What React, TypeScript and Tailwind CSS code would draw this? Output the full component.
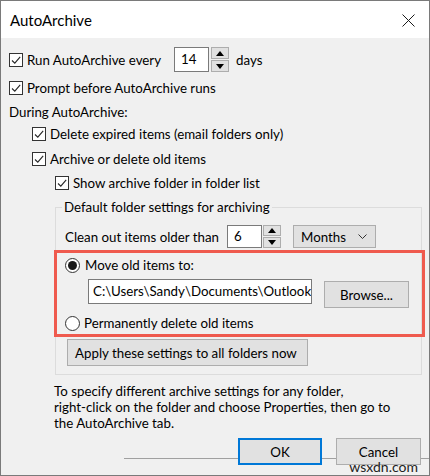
import React from "react";

function CheckBox() {
  return (
    <span className="inline-flex w-[14px] h-[14px] shrink-0 items-center justify-center border border-[#333333] bg-white">
      <svg width="12" height="12" viewBox="0 0 12 12">
        <polyline points="2,6.5 4.8,9.2 10.2,2.8" fill="none" stroke="#262626" strokeWidth="1.1" />
      </svg>
    </span>
  );
}

function Radio({ checked }: { checked?: boolean }) {
  return (
    <span className="inline-flex w-[15px] h-[15px] shrink-0 items-center justify-center rounded-full border border-[#333333] bg-white">
      {checked && <span className="w-[9px] h-[9px] rounded-full bg-[#1a1a1a]" />}
    </span>
  );
}

function Spinner({ h }: { h: number }) {
  const half = h === 25 ? "h-[12px]" : "h-[11px]";
  return (
    <div className="flex flex-col justify-between w-[18px]" style={{ height: h }}>
      <div className={`${half} border border-[#adadad] bg-[#e1e1e1] flex items-center justify-center`}>
        <svg width="8" height="5" viewBox="0 0 8 5">
          <polygon points="0,5 8,5 4,0" fill="#000" />
        </svg>
      </div>
      <div className={`${half} border border-[#adadad] bg-[#e1e1e1] flex items-center justify-center`}>
        <svg width="8" height="5" viewBox="0 0 8 5">
          <polygon points="0,0 8,0 4,5" fill="#000" />
        </svg>
      </div>
    </div>
  );
}

function CheckRow({ label, indent, className }: { label: string; indent: string; className: string }) {
  return (
    <div className={`flex items-center h-[20px] ${indent} ${className}`}>
      <CheckBox />
      <span className="ml-[4px] whitespace-nowrap">{label}</span>
    </div>
  );
}

export default function App() {
  return (
    <div
      className="relative w-[430px] h-[476px] overflow-hidden border border-[#7a7a7a] bg-[#f0f0f0] text-[13.3px] leading-[20px] text-black"
      style={{ fontFamily: "Lato, 'Noto Sans', sans-serif" }}
    >
      {/* title bar */}
      <div className="flex h-[37px] items-center justify-between bg-white pl-[9px] pr-[14px]">
        <span className="text-[15px] pt-[1px]">AutoArchive</span>
        <svg width="13" height="13" viewBox="0 0 13 13" className="mt-[1px]">
          <path d="M0.5 0.5L12.5 12.5M12.5 0.5L0.5 12.5" stroke="#1a1a1a" strokeWidth="1" />
        </svg>
      </div>

      <div className="pl-[8px]">
        {/* run every */}
        <div className="mt-[9px] flex h-[25px] items-center">
          <div className="flex w-[165px] items-center">
            <CheckBox />
            <span className="ml-[4px] whitespace-nowrap">Run AutoArchive every</span>
          </div>
          <div className="h-[25px] w-[35px] border border-[#7a7a7a] bg-white pl-[6px] leading-[23px]">14</div>
          <div className="ml-[2px]">
            <Spinner h={25} />
          </div>
          <span className="ml-[7px]">days</span>
        </div>

        <CheckRow label="Prompt before AutoArchive runs" indent="" className="mt-[6px]" />
        <div className="mt-[4px] h-[20px] leading-[20px]">During AutoArchive:</div>
        <CheckRow label="Delete expired items (email folders only)" indent="ml-[23px]" className="mt-[2px]" />
        <CheckRow label="Archive or delete old items" indent="ml-[23px]" className="mt-[5px]" />
        <CheckRow label="Show archive folder in folder list" indent="ml-[46px]" className="mt-[4px]" />

        {/* group box */}
        <fieldset className="mt-[4px] ml-[46px] w-[367px] border border-[#dcdcdc] pb-[8px]">
          <legend className="ml-[6px] px-[2px] leading-[20px]">Default folder settings for archiving</legend>

          <div className="mt-[8px] flex h-[23px] items-center pl-[9px]">
            <span className="w-[162px] whitespace-nowrap">Clean out items older than</span>
            <div className="h-[23px] w-[35px] border border-[#7a7a7a] bg-white pl-[6px] leading-[21px]">6</div>
            <div className="ml-[1px]">
              <Spinner h={23} />
            </div>
            <div className="ml-[12px] flex h-[23px] w-[83px] items-center justify-between border border-[#adadad] bg-[#e1e1e1] pl-[7px] pr-[8px]">
              <span>Months</span>
              <svg width="9" height="5" viewBox="0 0 9 5">
                <polyline points="0.5,0.5 4.5,4.5 8.5,0.5" fill="none" stroke="#333" strokeWidth="1" />
              </svg>
            </div>
          </div>

          {/* highlighted area */}
          <div className="ml-[-2px] mr-[-4px] mt-[2px] h-[87px] border-[3px] border-[#ef5a4e] pl-[8px]">
            <div className="mt-[2px] flex h-[20px] items-center">
              <Radio checked />
              <span className="ml-[5px]">Move old items to:</span>
            </div>
            <div className="mt-[4px] flex items-start pl-[23px]">
              <div className="h-[25px] w-[224px] overflow-hidden whitespace-nowrap border border-[#7a7a7a] bg-white pl-[4px] leading-[23px]">
                C:\Users\Sandy\Documents\Outlook F
              </div>
              <button className="ml-[12px] mt-[2px] h-[27px] w-[85px] border border-[#adadad] bg-[#e1e1e1]">Browse...</button>
            </div>
            <div className="mt-[5px] flex h-[20px] items-center">
              <Radio />
              <span className="ml-[4px]">Permanently delete old items</span>
            </div>
          </div>

          <button className="ml-[11px] mt-[2px] h-[27px] w-[241px] whitespace-nowrap border border-[#adadad] bg-[#e1e1e1] pl-[7px] text-left">
            Apply these settings to all folders now
          </button>
        </fieldset>

        <p className="ml-[45px] mt-[8px] leading-[16px]">
          To specify different archive settings for any folder,
          <br />
          right-click on the folder and choose Properties, then go to
          <br />
          the AutoArchive tab.
        </p>
      </div>

      {/* buttons */}
      <div className="relative mt-[7px]">
        <div className="absolute left-[123px] right-0 top-[20px] h-px bg-[#a0a0a0]" />
        <div className="relative flex justify-end gap-[14px] pr-[8px]">
          <button className="h-[27px] w-[84px] border-2 border-[#0078d7] bg-[#e1e1e1]">OK</button>
          <button className="h-[27px] w-[85px] border border-[#adadad] bg-[#e1e1e1]">Cancel</button>
        </div>
      </div>

      <div className="absolute bottom-[-1px] right-[11px] text-[14px] leading-[18px] text-[#222]">wsxdn.com</div>
    </div>
  );
}
